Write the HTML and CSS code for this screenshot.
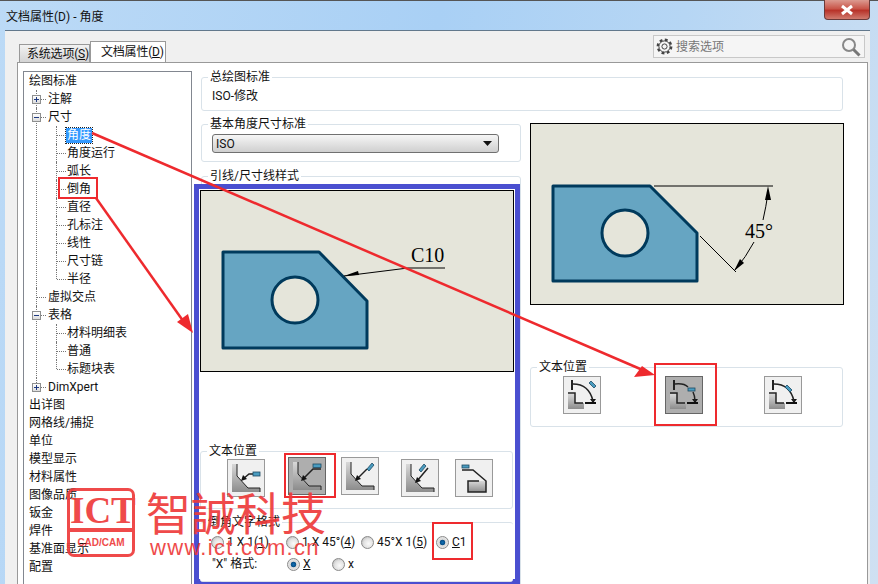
FILE: index.html
```html
<!DOCTYPE html>
<html>
<head>
	<meta charset="utf-8">
	<title>文档属性(D) - 角度</title>
	<link rel="stylesheet" href="styles.css">
</head>

<body>

<svg width="0" height="0" class="defs">
	<defs>
		<linearGradient id="metal" x1="0" y1="0" x2="0" y2="1">
			<stop offset="0" stop-color="#d8d8d8"/>
			<stop offset="1" stop-color="#8c8c8c"/>
		</linearGradient>
		<g id="chamfer">
			<polygon points="5,5 10,5 10,17 21,29 33,29 33,33 5,33" fill="url(#metal)"/>
			<polyline points="10,5 10,17 21,29 33,29 33,33" fill="none" stroke="#222" stroke-width="1"/>
		</g>
		<g id="corner">
			<polygon points="5,18 12,18 12,27 21,27 21,33 5,33" fill="url(#metal)"/>
			<polyline points="5,17 12,17 12,27 20,27" fill="none" stroke="#222" stroke-width="1.500"/>
			<path d="M9 4V14" stroke="#222" stroke-width="2"/>
			<path d="M22 27H33" stroke="#111" stroke-width="2"/>
			<path d="M27 23h6l-3 4z" fill="#111"/>
		</g>
	</defs>
</svg>

<div class="titlebar">
	<span class="title">文档属性(D) - 角度</span>
	<div class="close">
		<svg width="16" height="12" viewBox="0 0 16 12"><path d="M3 2L13 10M13 2L3 10" stroke="#fff" stroke-width="3"/></svg>
	</div>
</div>

<div class="client">
	<div class="tabrow">
		<div class="tabs">
			<div class="tab">系统选项(<u>S</u>)</div>
			<div class="tab active">文档属性(<u>D</u>)</div>
		</div>
		<div class="search">
			<svg width="17" height="17" viewBox="0 0 17 17">
				<circle cx="8.500" cy="8.500" r="6.600" fill="none" stroke="#444" stroke-width="2.600" stroke-dasharray="2.800 2.400"/>
				<circle cx="8.500" cy="8.500" r="5.600" fill="#f5f5f5" stroke="#444" stroke-width="1"/>
				<circle cx="8.500" cy="8.500" r="2.600" fill="none" stroke="#444" stroke-width="1"/>
			</svg>
			<span class="search-text">搜索选项</span>
			<svg class="lens" width="20" height="20" viewBox="0 0 20 20">
				<circle cx="8" cy="8" r="6" fill="none" stroke="#888" stroke-width="2"/>
				<path d="M12.500 12.500L18.500 18.500" stroke="#777" stroke-width="3"/>
			</svg>
		</div>
	</div>

	<div class="panel">
		<div class="tree">
			<ul class="top">
				<li><span class="label">绘图标准</span>
					<ul class="sub1">
						<li><i class="exp plus"></i><span class="label">注解</span></li>
						<li><i class="exp"></i><span class="label">尺寸</span>
							<ul class="sub2">
								<li><span class="label selected">角度</span></li>
								<li><span class="label">角度运行</span></li>
								<li><span class="label">弧长</span></li>
								<li><span class="label">倒角</span></li>
								<li><span class="label">直径</span></li>
								<li><span class="label">孔标注</span></li>
								<li><span class="label">线性</span></li>
								<li><span class="label">尺寸链</span></li>
								<li><span class="label">半径</span></li>
							</ul>
						</li>
						<li><span class="label">虚拟交点</span></li>
						<li><i class="exp"></i><span class="label">表格</span>
							<ul class="sub2">
								<li><span class="label">材料明细表</span></li>
								<li><span class="label">普通</span></li>
								<li><span class="label">标题块表</span></li>
							</ul>
						</li>
						<li><i class="exp plus"></i><span class="label">DimXpert</span></li>
					</ul>
				</li>
				<li><span class="label">出详图</span></li>
				<li><span class="label">网格线/捕捉</span></li>
				<li><span class="label">单位</span></li>
				<li><span class="label">模型显示</span></li>
				<li><span class="label">材料属性</span></li>
				<li><span class="label">图像品质</span></li>
				<li><span class="label">钣金</span></li>
				<li><span class="label">焊件</span></li>
				<li><span class="label">基准面显示</span></li>
				<li><span class="label">配置</span></li>
			</ul>
		</div>

		<div class="pane">
			<div class="group standard">
				<div class="group-title">总绘图标准</div>
				<div class="standard-value">ISO-修改</div>
			</div>

			<div class="columns">
				<div class="col-left">
					<div class="group base">
						<div class="group-title">基本角度尺寸标准</div>
						<div class="select">
							<span>ISO</span>
							<svg width="9" height="5" viewBox="0 0 9 5"><path d="M0 0H9L4.500 5z" fill="#111"/></svg>
						</div>
					</div>

					<div class="group leader">
						<div class="group-title">引线/尺寸线样式</div>
						<div class="frame">
							<div class="preview">
								<svg width="312" height="180" viewBox="1 1 312 180">
									<path d="M23 62H119L167 111V158H23z" fill="#66a5c2" stroke="#003a5c" stroke-width="3" stroke-linejoin="round"/>
									<circle cx="95" cy="110" r="23" fill="#e5e5da" stroke="#003a5c" stroke-width="3"/>
									<path d="M144 86L208 78H245" fill="none" stroke="#000" stroke-width="1"/>
									<path d="M144 86L158 81L159 85z" fill="#000"/>
									<text x="211" y="72" class="dim">C10</text>
								</svg>
							</div>

							<div class="group text-pos">
								<div class="group-title">文本位置</div>
								<div class="icons">
									<div class="icon">
										<svg width="36" height="36" viewBox="1 1 36 36">
											<use href="#chamfer"/>
											<path d="M16 20L22 15H26" fill="none" stroke="#222" stroke-width="1.500"/>
											<path d="M14 22l2 -6l4 4z" fill="#111"/>
											<rect x="26" y="13" width="7" height="4" fill="#4a9cc0" stroke="#1d4a63" stroke-width=".8"/>
										</svg>
									</div>
									<div class="icon on">
										<svg width="36" height="36" viewBox="1 1 36 36">
											<use href="#chamfer"/>
											<path d="M15 22L25 12H33" fill="none" stroke="#222" stroke-width="1.500"/>
											<path d="M13 24l2 -6l4 4z" fill="#111"/>
											<rect x="25" y="7" width="8" height="3.500" fill="#4a9cc0" stroke="#1d4a63" stroke-width=".8"/>
										</svg>
									</div>
									<div class="icon">
										<svg width="36" height="36" viewBox="1 1 36 36">
											<use href="#chamfer"/>
											<path d="M16 22L26 12" fill="none" stroke="#222" stroke-width="1.500"/>
											<path d="M14 24l2 -6l4 4z" fill="#111"/>
											<path d="M26 12L31 6L33 8L28 14z" fill="#4a9cc0" stroke="#1d4a63" stroke-width=".8"/>
										</svg>
									</div>
									<div class="icon">
										<svg width="36" height="36" viewBox="1 1 36 36">
											<use href="#chamfer"/>
											<path d="M16 22L27 9" fill="none" stroke="#222" stroke-width="1.500"/>
											<path d="M14 24l2 -6l4 4z" fill="#111"/>
											<path d="M18 11L23 5L25 7L20 13z" fill="#4a9cc0" stroke="#1d4a63" stroke-width=".8"/>
										</svg>
									</div>
									<div class="icon">
										<svg width="36" height="36" viewBox="1 1 36 36">
											<polygon points="13,22 31,22 31,33 13,33" fill="url(#metal)"/>
											<path d="M7 11H18L31 22V33H13V22H24" fill="none" stroke="#222" stroke-width="1.500"/>
											<rect x="7" y="6" width="7" height="3" fill="#4a9cc0" stroke="#1d4a63" stroke-width=".8"/>
										</svg>
									</div>
								</div>
							</div>

							<div class="group format">
								<div class="group-title">倒角文字格式</div>
								<div class="radio-row">
									<span class="radio-item"><i class="radio"></i>1 X 1(<u>1</u>)</span>
									<span class="radio-item"><i class="radio"></i>1 X 45°(<u>4</u>)</span>
									<span class="radio-item"><i class="radio"></i>45°X 1(<u>5</u>)</span>
									<span class="radio-item"><i class="radio checked"></i><u>C</u>1</span>
								</div>
								<div class="radio-row second">
									<span class="format-label">"X" 格式:</span>
									<span class="radio-item short"><i class="radio checked"></i><u>X</u></span>
									<span class="radio-item short"><i class="radio"></i>x</span>
								</div>
							</div>
						</div>
					</div>
				</div>

				<div class="col-right">
					<div class="preview side">
						<svg width="312" height="180" viewBox="1 1 312 180">
							<path d="M23 63H120L167 110V158H23z" fill="#66a5c2" stroke="#003a5c" stroke-width="3" stroke-linejoin="round"/>
							<circle cx="95" cy="110" r="23" fill="#e5e5da" stroke="#003a5c" stroke-width="3"/>
							<path d="M124 63H243M170 113L206 149" fill="none" stroke="#000" stroke-width="1"/>
							<path d="M238 70Q236 84 233 97M224 119Q216 134 205 147" fill="none" stroke="#000" stroke-width="1"/>
							<path d="M238 63L235 77H241z" fill="#000"/>
							<path d="M204 148L210 136L214 140z" fill="#000"/>
							<text x="215" y="115" class="dim">45°</text>
						</svg>
					</div>

					<div class="group text-pos angle">
						<div class="group-title">文本位置</div>
						<div class="icons wide">
							<div class="icon">
								<svg width="36" height="36" viewBox="1 1 36 36">
									<use href="#corner"/>
									<path d="M10 8Q26 8 30 25" fill="none" stroke="#222" stroke-width="1.500"/>
									<path d="M26 7L28 5L33 10L31 12z" fill="#4a9cc0" stroke="#1d4a63" stroke-width=".8"/>
								</svg>
							</div>
							<div class="icon on">
								<svg width="36" height="36" viewBox="1 1 36 36">
									<use href="#corner"/>
									<path d="M10 8Q19 7 23 11M28 16Q30 20 30 25" fill="none" stroke="#222" stroke-width="1.500"/>
									<rect x="23" y="12" width="7" height="3" fill="#4a9cc0" stroke="#1d4a63" stroke-width=".8"/>
								</svg>
							</div>
							<div class="icon">
								<svg width="36" height="36" viewBox="1 1 36 36">
									<use href="#corner"/>
									<path d="M10 8Q26 8 30 25" fill="none" stroke="#222" stroke-width="1.500"/>
									<path d="M21 11L23 9L28 14L26 16z" fill="#4a9cc0" stroke="#1d4a63" stroke-width=".8"/>
								</svg>
							</div>
						</div>
					</div>
				</div>
			</div>
		</div>
	</div>
</div>

<!-- red markup drawn over the dialog -->
<svg class="markup" width="878" height="584" viewBox="0 0 878 584">
	<g fill="none" stroke="#ee2a2e" stroke-width="2">
		<rect x="59" y="178" width="38" height="20"/>
		<rect x="655" y="364" width="61" height="61"/>
		<rect x="285" y="454" width="50" height="43"/>
		<rect x="433" y="523" width="39" height="36"/>
		<path d="M92 133L645 371" stroke-width="2.500"/>
		<path d="M96 198L186 325" stroke-width="2.500"/>
	</g>
	<path d="M655 375L634 377L642 366z" fill="#ee2a2e"/>
	<path d="M193 333L177 322L188 314z" fill="#ee2a2e"/>
</svg>

<div class="watermark">
	<div class="logo">
		<div class="logo-top">ICT</div>
		<div class="logo-bottom">CAD/CAM</div>
	</div>
	<div class="brand">
		<div class="brand-name">智誠科技</div>
		<div class="brand-url">www.ict.com.cn</div>
	</div>
</div>

</body>
</html>
```

FILE: styles.css
```css
*{
	box-sizing: border-box;
}
html, body{
	margin: 0;
	height: 584px;
	overflow: hidden;
}
body{
	position: relative;
	width: 878px;
	background: linear-gradient(100deg, #bcdaf6 0%, #a9d0f5 45%, #b6d6f4 70%, #cfe0f2 100%);
	font-family: Roboto, "Noto Sans CJK SC", sans-serif;
	font-size: 12px;
	line-height: 18px;
	color: #111;
}
.defs{
	position: absolute;
}
.titlebar{
	height: 30px;
	padding: 7px 8px 0 6px;
	display: flex;
	justify-content: space-between;
	align-items: flex-start;
	border-top: 1px solid #555;
}
.close{
	width: 46px;
	height: 20px;
	margin-top: -8px;
	display: flex;
	align-items: center;
	justify-content: center;
	background: linear-gradient(#dc9a90 0%, #c9564a 45%, #b8332a 55%, #d07a6e 100%);
	border: 1px solid #6a3a3a;
	border-top: none;
	border-radius: 0 0 4px 4px;
}
.client{
	margin: 0 8px 0 5px;
	height: 554px;
	background: #f0f0f0;
	border-top: 1px solid #62788c;
	padding-left: 12px;
	padding-right: 2px;
}

/* tabs and search */
.tabrow{
	height: 31px;
	display: flex;
	justify-content: space-between;
	align-items: flex-start;
}
.tabs{
	display: flex;
	align-items: flex-end;
	height: 31px;
	padding-left: 2px;
	margin-bottom: -1px;
}
.tab{
	width: 71px;
	height: 18px;
	padding-left: 7px;
	background: linear-gradient(#f2f2f2, #d4d4d4);
	border: 1px solid #999;
	border-bottom: none;
	white-space: nowrap;
	letter-spacing: -.2px;
}
.tab.active{
	width: 76px;
	height: 21px;
	padding: 1px 0 0 10px;
	background: #fff;
	position: relative;
	z-index: 1;
}
.search{
	width: 212px;
	height: 23px;
	margin: 4px 3px 0 0;
	padding: 0 3px 0 2px;
	display: flex;
	align-items: center;
	background: #f5f5f5;
	border: 1px solid #c8c8c8;
}
.search-text{
	margin-left: 3px;
	color: #777;
}
.lens{
	margin-left: auto;
}
.panel{
	height: 524px;
	background: #fff;
	border: 1px solid #999;
	border-bottom: none;
	display: flex;
	padding: 8px 0 0 5px;
}

/* tree */
.tree{
	width: 169px;
	height: 520px;
	border: 1px solid #828790;
	border-bottom: none;
	flex: none;
}
.tree ul{
	list-style: none;
	margin: 0;
	padding: 0;
}
.top{
	padding-left: 5px !important;
}
.tree li{
	position: relative;
	white-space: nowrap;
}
.label{
	display: inline-block;
	height: 18px;
	vertical-align: top;
}
.sub1{
	margin-left: 7px !important;
}
.sub1 > li{
	padding-left: 12px;
}
.sub2{
	margin-left: 8px !important;
}
.sub2 > li{
	padding-left: 11px;
}
.sub1 > li::before, .sub2 > li::before{
	content: "";
	position: absolute;
	left: 0;
	top: 0;
	height: 100%;
	border-left: 1px dotted #777;
}
.sub1 > li:last-child::before, .sub2 > li:last-child::before{
	height: 9px;
}
.sub1 > li::after, .sub2 > li::after{
	content: "";
	position: absolute;
	left: 1px;
	top: 9px;
	width: 9px;
	border-top: 1px dotted #777;
}
.exp{
	position: absolute;
	left: -4px;
	top: 5px;
	width: 9px;
	height: 9px;
	z-index: 1;
	background: linear-gradient(#fff, #dcdcdc);
	border: 1px solid #8e8f8f;
}
.exp::before{
	content: "";
	position: absolute;
	left: 1px;
	top: 3px;
	width: 5px;
	height: 1px;
	background: #1f3a80;
}
.exp.plus::after{
	content: "";
	position: absolute;
	left: 3px;
	top: 1px;
	width: 1px;
	height: 5px;
	background: #1f3a80;
}
.label.selected{
	height: 15px;
	line-height: 14px;
	margin: 2px 0 0 -1px;
	padding: 0 1px;
	background: #3399ff;
	color: #fff;
	outline: 1px dotted #222;
}

/* right side */
.pane{
	width: 642px;
	margin: 6px 0 0 9px;
	flex: none;
}
.group{
	border: 1px solid #d9e2e9;
	border-radius: 3px;
	background: #fff;
}
.group-title{
	width: fit-content;
	height: 16px;
	line-height: 16px;
	margin: -9px 0 0 6px;
	padding: 0 2px;
	background: #fff;
}
.standard{
	height: 34px;
}
.standard-value{
	padding-left: 10px;
	line-height: 16px;
	margin-top: 3px;
}
.columns{
	display: flex;
	gap: 9px;
	margin-top: 13px;
}
.col-left{
	width: 320px;
	flex: none;
}
.col-right{
	width: 313px;
	flex: none;
	margin-top: -1px;
}
.base{
	height: 38px;
}
.select{
	width: 287px;
	height: 19px;
	margin: 2px 0 0 10px;
	padding: 0 6px 0 3px;
	display: flex;
	justify-content: space-between;
	align-items: center;
	background: linear-gradient(#f6f6f6, #cfcfcf);
	border: 1px solid #707070;
	border-radius: 3px;
}
.leader{
	margin-top: 14px;
	height: 420px;
}
.frame{
	width: 326px;
	height: 400px;
	margin: 0 0 0 -8px;
	padding: 1px;
	position: relative;
	background: #fff;
	border: 5px solid #4a4fd0;
}
.preview{
	width: 314px;
	height: 182px;
	background: #e5e5da;
	border: 1px solid #000;
}
.preview svg{
	display: block;
}
.dim{
	font-family: "Liberation Serif", serif;
	font-size: 20px;
	fill: #000;
}
.text-pos{
	width: 313px;
	height: 58px;
	margin-top: 79px;
}
.icons{
	display: flex;
	align-items: flex-start;
	padding-left: 26px;
}
.icon{
	width: 38px;
	height: 38px;
	flex: none;
	background: #f0f0f0;
	border: 1px solid #999;
}
.icon svg{
	display: block;
}
.icon.on{
	background: #aeaeae;
	border-color: #666;
}
.text-pos .icons{
	margin-top: -1px;
}
.text-pos .icon:nth-child(1){
	margin-top: 1px;
}
.text-pos .icon:nth-child(2){
	margin: -1px 0 0 23px;
}
.text-pos .icon:nth-child(3){
	margin: -1px 0 0 15px;
}
.text-pos .icon:nth-child(4){
	margin: 1px 0 0 22px;
}
.text-pos .icon:nth-child(5){
	margin: 1px 0 0 16px;
}
.angle{
	margin-top: 62px;
	height: 60px;
}
.icons.wide{
	margin-top: 1px;
	padding-left: 32px;
}
.icons.wide .icon:nth-child(1){
	margin: 0;
}
.icons.wide .icon:nth-child(2){
	margin: 0 0 0 64px;
}
.icons.wide .icon:nth-child(3){
	margin: 0 0 0 61px;
}
.format{
	margin-top: 13px;
	width: 313px;
	height: 60px;
	border-left: none;
	border-right: none;
}
.radio-row{
	display: flex;
	align-items: center;
	height: 22px;
	margin-top: 1px;
	padding-left: 11px;
}
.radio-row.second{
	margin-top: 0;
}
.radio-item{
	width: 75px;
	display: flex;
	align-items: center;
	white-space: nowrap;
}
.radio-item.short{
	width: 45px;
}
.format-label{
	width: 76px;
	padding-left: 1px;
}
.radio{
	width: 13px;
	height: 13px;
	margin-right: 3px;
	flex: none;
	border-radius: 50%;
	border: 1px solid #8a8a8a;
	background: radial-gradient(circle at 60% 60%, #fafafa 0, #e2e2e2 50%, #aaa 100%);
}
.radio.checked{
	background: radial-gradient(circle, #0d6fb5 0, #0a4f86 32%, #d8d8d8 40%, #f4f4f4 100%);
}

/* overlays */
.markup{
	position: absolute;
	left: 0;
	top: 0;
}
.watermark{
	position: absolute;
	left: 67px;
	top: 488px;
	display: flex;
	gap: 11px;
	color: #ee3b3b;
	opacity: .92;
}
.logo{
	width: 68px;
	height: 69px;
	border: 3px solid #ee3b3b;
	border-radius: 7px;
	display: flex;
	flex-direction: column;
	text-align: center;
}
.logo-top{
	height: 41px;
	font-family: "Liberation Serif", serif;
	font-weight: bold;
	font-size: 37px;
	line-height: 39px;
	border-bottom: 4px solid #ee3b3b;
}
.logo-bottom{
	font-family: "Liberation Sans", sans-serif;
	font-weight: bold;
	font-size: 10px;
	line-height: 21px;
}
.brand-name{
	font-size: 45px;
	line-height: 48px;
	font-family: "Noto Sans CJK TC", "Noto Sans CJK SC", sans-serif;
}
.brand-url{
	margin: 0 0 0 4px;
	font-family: "Liberation Sans", sans-serif;
	font-size: 22px;
	line-height: 24px;
	letter-spacing: 1.3px;
}
```
